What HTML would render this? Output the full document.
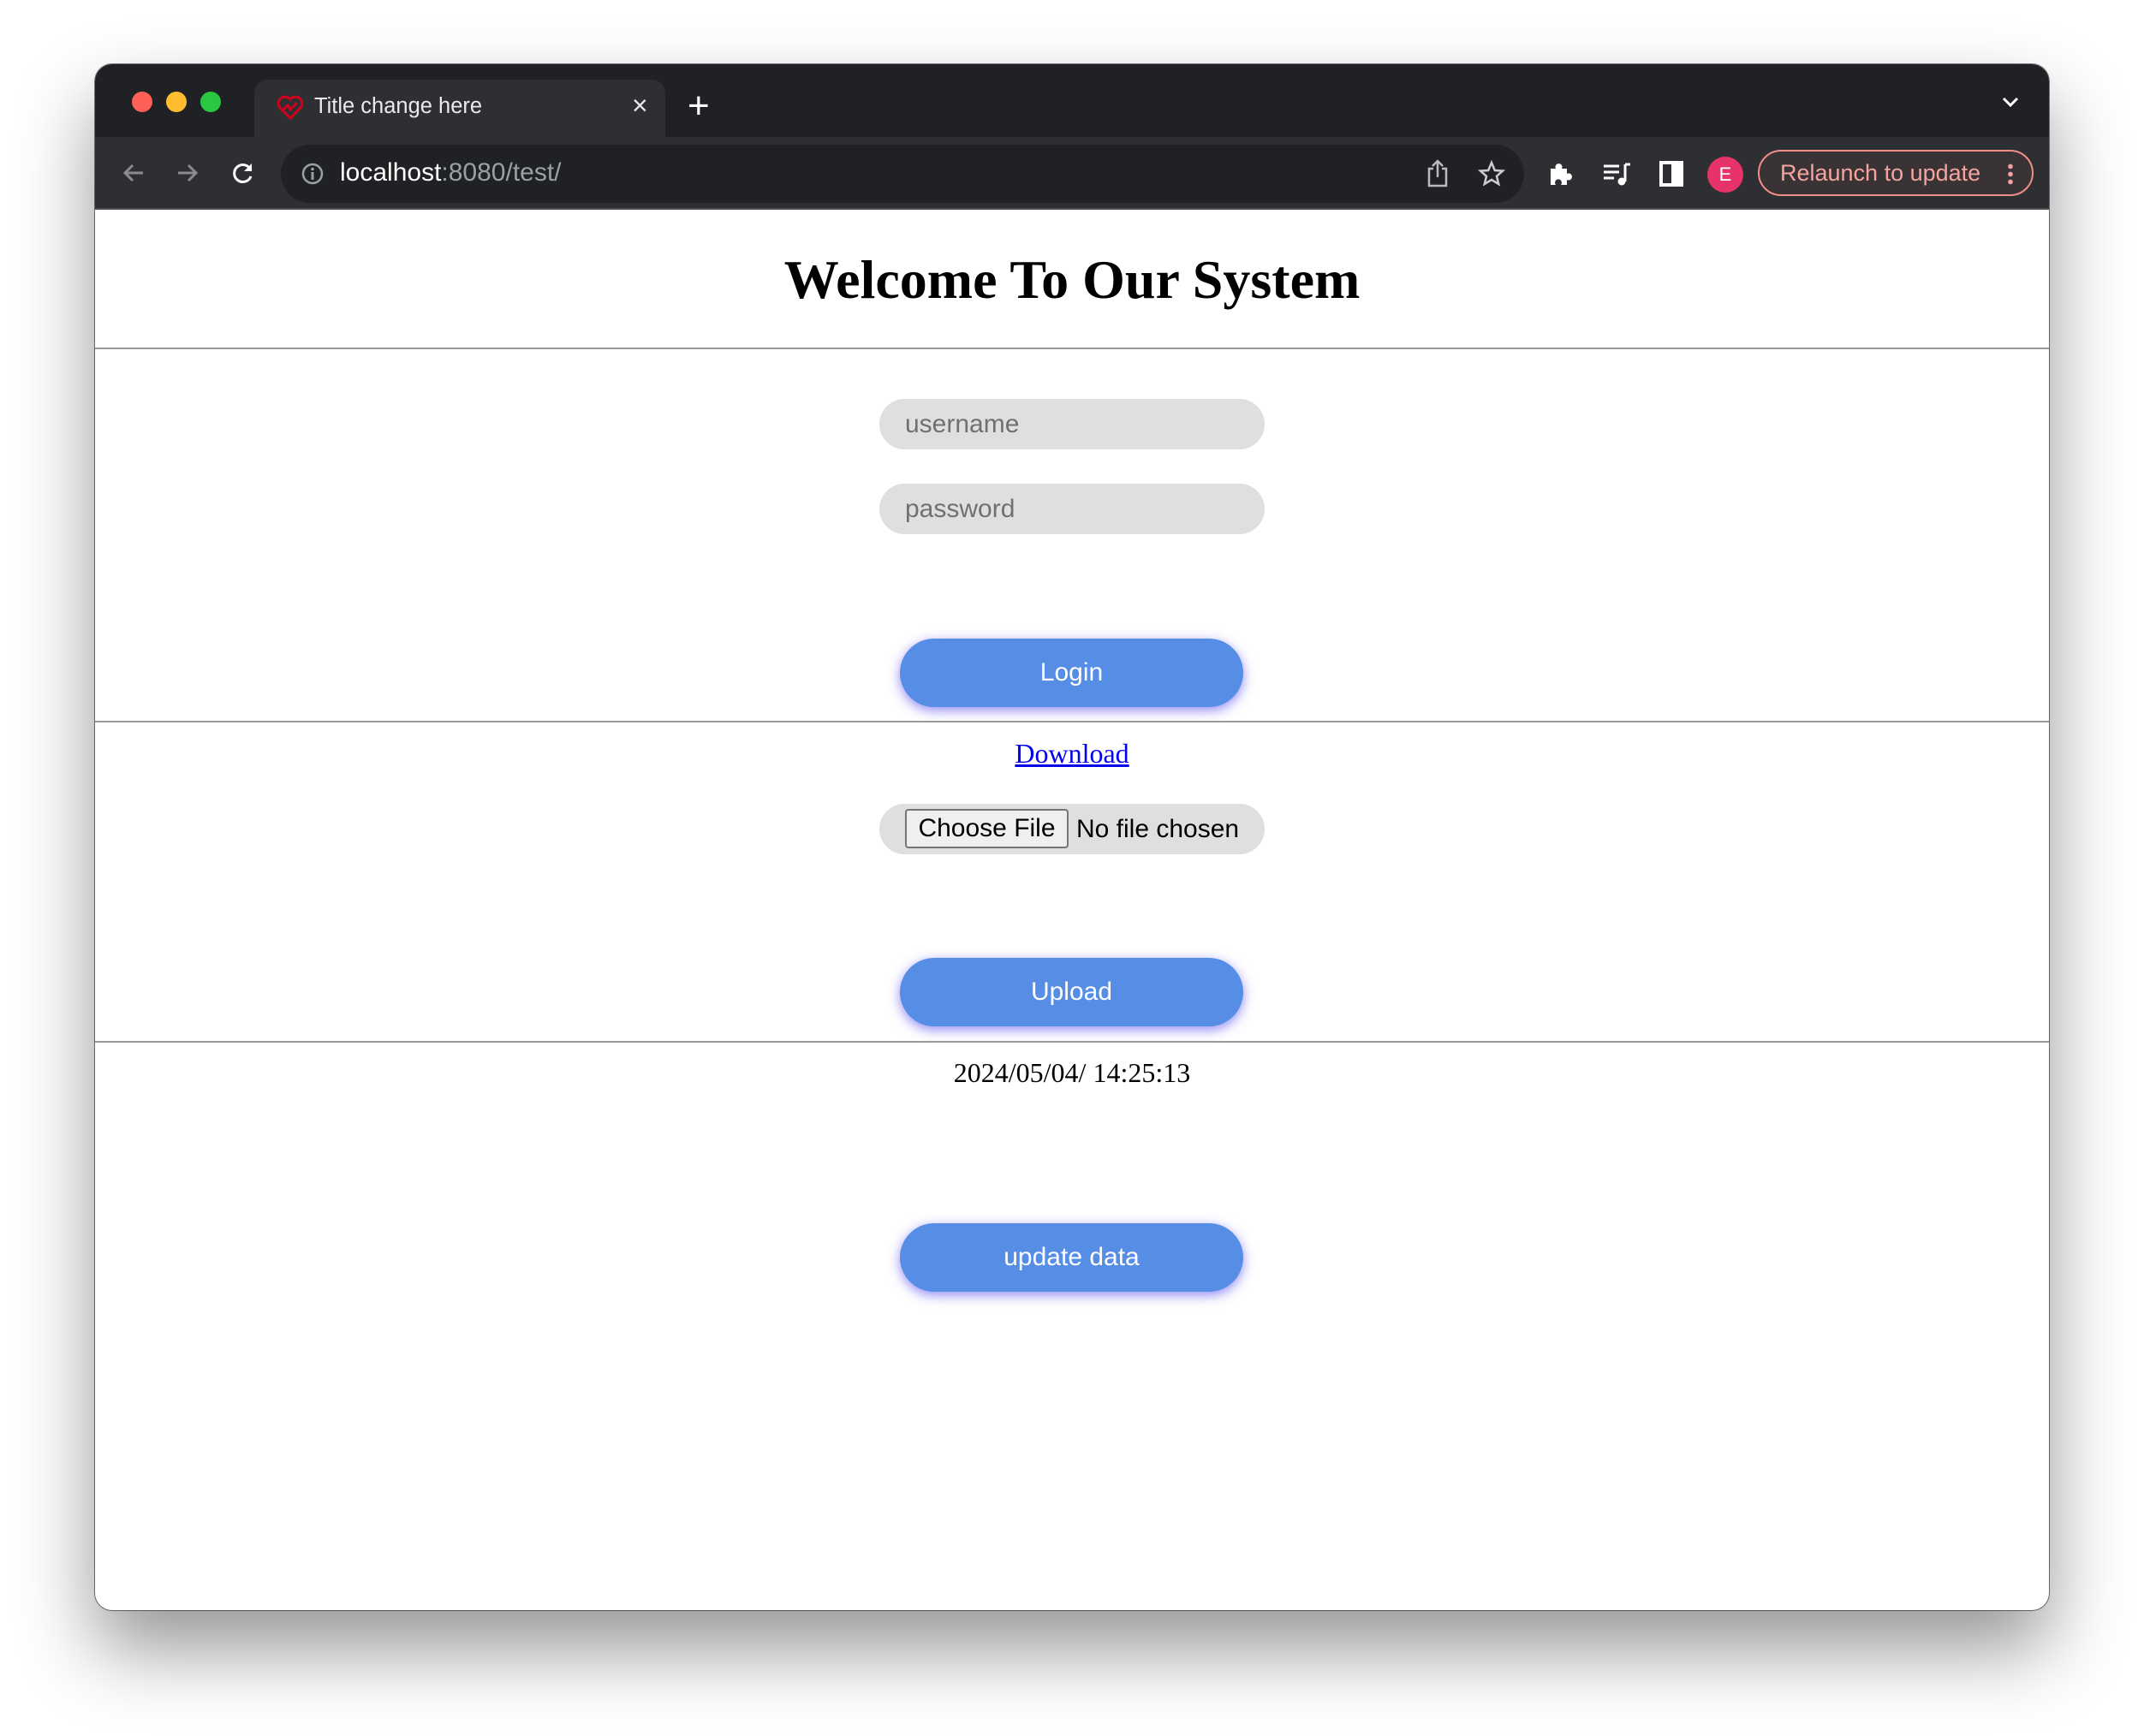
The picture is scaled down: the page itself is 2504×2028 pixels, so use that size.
<!DOCTYPE html>
<html><head><meta charset="utf-8"><style>
*{margin:0;padding:0;box-sizing:border-box}
body{width:2504px;height:2028px;background:#fff;position:relative;overflow:hidden;font-family:"Liberation Sans",Arial,sans-serif}
.win{position:absolute;left:111px;top:75px;width:2282px;height:1806px;border-radius:20px;overflow:hidden;background:#fff;box-shadow:0 45px 90px rgba(0,0,0,0.42),0 0 0 1px rgba(0,0,0,0.5)}
.tabbar{position:absolute;left:0;top:0;width:100%;height:85px;background:#202124}
.tool{position:absolute;left:0;top:85px;width:100%;height:85px;background:#2e2f33;border-bottom:2px solid #4a4b4f}
.dot{position:absolute;top:32px;width:24px;height:24px;border-radius:50%}
.tab{position:absolute;left:186px;top:18px;width:480px;height:70px;background:#2e2f33;border-radius:16px 16px 0 0}
.ab{position:absolute;color:#fff}
.omni{position:absolute;left:217px;top:9px;width:1452px;height:68px;border-radius:34px;background:#202124}
.hr{position:absolute;left:0;width:100%;height:2px;background:#9a9a9a}
.inp{position:absolute;left:916px;width:450px;height:59px;border-radius:30px;background:#dfdfdf;color:#707070;font-size:30px;padding-left:30px;line-height:59px}
.btn{position:absolute;left:940px;width:401px;height:80px;border-radius:40px;background:#568de5;color:#fff;font-size:30px;text-align:center;line-height:80px;box-shadow:0 4px 14px rgba(110,100,240,0.75)}
.ser{font-family:"Liberation Serif","Times New Roman",serif}
</style></head><body>
<div class="win">
 <div class="tabbar">
  <div class="dot" style="left:43px;background:#fe5f57"></div>
  <div class="dot" style="left:83px;background:#febc2e"></div>
  <div class="dot" style="left:123px;background:#28c840"></div>
  <div class="tab">
   <svg style="position:absolute;left:26px;top:18px" width="32" height="30" viewBox="0 0 32 30"><path d="M16 27 L4 15 A7 7 0 0 1 16 5 A7 7 0 0 1 28 15 Z" fill="none" stroke="#d0021b" stroke-width="3"/><path d="M6 19 L13 12 L16 17 L24 9" fill="none" stroke="#d0021b" stroke-width="3"/></svg>
   <div class="ab" style="left:70px;top:17px;font-size:25.5px;color:#e8eaed">Title change here</div>
   <div class="ab" style="left:441px;top:12px;font-size:32px;color:#e8eaed">×</div>
  </div>
  <div class="ab" style="left:692px;top:24px;font-size:44px;font-weight:300">+</div>
  <svg style="position:absolute;left:2226px;top:36px" width="22" height="16" viewBox="0 0 22 16"><path d="M3 4 L11 12 L19 4" fill="none" stroke="#fff" stroke-width="3"/></svg>
 </div>
 <div class="tool">
  <svg style="position:absolute;left:30px;top:27px" width="30" height="30" viewBox="0 0 30 30"><path d="M26 15 H5 M14 6 L5 15 L14 24" fill="none" stroke="#8a8b8f" stroke-width="3"/></svg>
  <svg style="position:absolute;left:93px;top:27px" width="30" height="30" viewBox="0 0 30 30"><path d="M4 15 H25 M16 6 L25 15 L16 24" fill="none" stroke="#8a8b8f" stroke-width="3"/></svg>
  <svg style="position:absolute;left:158px;top:27px" width="30" height="30" viewBox="0 0 30 30"><path d="M24 12 A10 10 0 1 0 24 19" fill="none" stroke="#fff" stroke-width="3"/><path d="M25 4 V13 H16 Z" fill="#fff"/></svg>
  <div class="omni">
   <svg style="position:absolute;left:23px;top:20px" width="28" height="28" viewBox="0 0 28 28"><circle cx="14" cy="14" r="11" fill="none" stroke="#9aa0a6" stroke-width="2.5"/><rect x="12.5" y="12" width="3" height="9" fill="#9aa0a6"/><circle cx="14" cy="8.5" r="1.8" fill="#9aa0a6"/></svg>
   <div class="ab" style="left:69px;top:16px;font-size:30px;color:#fff">localhost<span style="color:#9aa0a6">:8080/test/</span></div>
   <svg style="position:absolute;left:1337px;top:16px" width="28" height="36" viewBox="0 0 28 36"><path d="M9 12 H4 V32 H24 V12 H19 M14 22 V3 M8 9 L14 3 L20 9" fill="none" stroke="#bbb" stroke-width="2.5"/></svg>
   <svg style="position:absolute;left:1398px;top:18px" width="32" height="32" viewBox="0 0 32 32"><path d="M16 3 L19.8 12 L29 12.6 L22 18.8 L24.2 28 L16 23 L7.8 28 L10 18.8 L3 12.6 L12.2 12 Z" fill="none" stroke="#ccc" stroke-width="2.5"/></svg>
  </div>
  <svg style="position:absolute;left:1696px;top:27px" width="32" height="32" viewBox="0 0 32 32"><path d="M4 10 H10 A4 4 0 1 1 17 10 H23 V16 A4 4 0 1 1 23 23 V29 H16 A4 4 0 1 0 10 29 H4 Z" fill="#fff"/></svg>
  <svg style="position:absolute;left:1760px;top:27px" width="34" height="32" viewBox="0 0 34 32"><path d="M2 7 H20 M2 14 H20 M2 21 H14" stroke="#fff" stroke-width="3"/><path d="M27 5 V25" stroke="#fff" stroke-width="3"/><circle cx="23" cy="25" r="4.5" fill="#fff"/><path d="M27 5 H33" stroke="#fff" stroke-width="3"/></svg>
  <div style="position:absolute;left:1827px;top:28px;width:28px;height:30px;border:4px solid #fff;border-right-width:14px"></div>
  <div style="position:absolute;left:1883px;top:23px;width:42px;height:42px;border-radius:50%;background:#e8336a;color:#fff;font-size:22px;text-align:center;line-height:42px">E</div>
  <div style="position:absolute;left:1942px;top:15px;width:322px;height:54px;border-radius:27px;border:2px solid #f08f88;background:#3a3336;color:#f4a49d;font-size:27px;line-height:50px;padding-left:24px">Relaunch to update</div>
  <div style="position:absolute;left:2234px;top:30px;width:6px;height:26px;background:radial-gradient(circle,#f4a49d 2.5px,transparent 3px) 0 0/6px 9px"></div>
 </div>
 <div class="ab ser" style="left:0;width:100%;top:212px;text-align:center;color:#000;font-size:64px;font-weight:bold;line-height:80px">Welcome To Our System</div>
 <div class="hr" style="top:331px"></div>
 <div class="inp" style="top:391px">username</div>
 <div class="inp" style="top:490px">password</div>
 <div class="btn" style="top:671px">Login</div>
 <div class="hr" style="top:767px"></div>
 <div class="ab ser" style="left:0;width:100%;top:785px;text-align:center;font-size:32px;line-height:40px"><span style="color:#0000ee;text-decoration:underline">Download</span></div>
 <div class="inp" style="top:864px;padding-left:0">
  <div style="position:absolute;left:30px;top:6px;width:191px;height:46px;background:#efefef;border:2px solid #767676;border-radius:4px;color:#000;font-size:30px;line-height:42px;text-align:center">Choose File</div>
  <div style="position:absolute;left:230px;top:0;color:#000;font-size:30px">No file chosen</div>
 </div>
 <div class="btn" style="top:1044px">Upload</div>
 <div class="hr" style="top:1141px"></div>
 <div class="ab ser" style="left:0;width:100%;top:1158px;text-align:center;color:#000;font-size:32px;line-height:40px">2024/05/04/ 14:25:13</div>
 <div class="btn" style="top:1354px">update data</div>
</div>
</body></html>
